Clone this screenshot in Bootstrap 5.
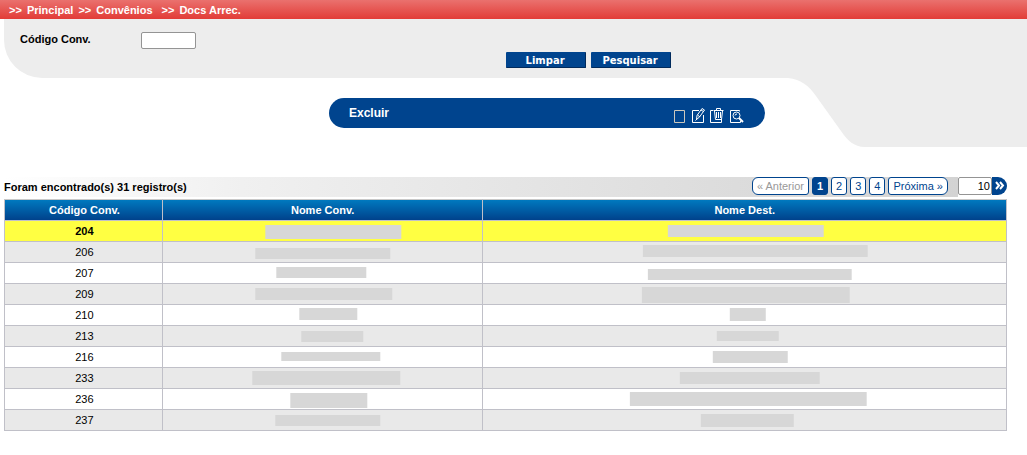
<!DOCTYPE html>
<html lang="pt-BR">
<head>
<meta charset="utf-8">
<meta name="viewport" content="width=device-width, initial-scale=1">
<title>Docs Arrec.</title>
<link href="https://cdn.jsdelivr.net/npm/bootstrap@5.3.0/dist/css/bootstrap.min.css" rel="stylesheet">
<style>
:root { --azul: #00448e; --painel: #ededed; }
body { font-family: "Liberation Sans", Arial, sans-serif; font-size: 11px; line-height: 14px; color: #000; background: #fff; }
a { color: inherit; text-decoration: none; }
.trilha { height: 19px; padding-left: 9px; color: #fff; background: linear-gradient(#ea716e, #e23c37); }
.trilha li + li { margin-left: 5px; }
.trilha a { margin-left: 2px; }
.painel { margin-left: 4px; padding: 13px 16px 10px; background: var(--painel); border-bottom-left-radius: 38px; }
.painel label { width: 121px; }
.painel .form-control { width: 55px; height: 17px; min-height: 0; padding: 0 2px; font-size: 11px; border: 1px solid #949494; border-radius: 2px; }
.acoes { margin-top: 3px; padding-left: 49%; gap: 5px; }
.acoes .btn { width: 80px; height: 16px; padding: 1px 0 0; color: #fff; background: var(--azul); border: 0 solid #002a5c; border-width: 0 1px 1px 0; border-radius: 1px; font: bold 10px/16px "DejaVu Sans", Verdana, sans-serif; }
.curva { width: 239px; height: 69px; }
.curva svg { width: 77px; height: 69px; }
.curva div { background: var(--painel); }
.barra { width: 436px; height: 30px; margin: 20px 0 0 41.75%; padding: 0 21px 0 20px; border-radius: 15px; background: var(--azul); color: #fff; font-size: 12px; }
.icones { gap: 4px; margin-top: 4px; }
.icones .btn { width: 15px; height: 18px; padding: 0; border: 0; line-height: 0; border-radius: 0; }
.lista { margin: 30px 20px 24px 4px; }
.resumo { min-height: 20px; background: linear-gradient(90deg, #fff 0%, #f0f0f0 25%, #d3d3d3 100%); padding-right: 10px; }
.resumo strong { padding-top: 3px; }
.paginas { gap: 4px; }
.paginas .page-link { height: 18px; padding: 0 4px; border: 1px solid var(--azul); border-radius: 3px; color: var(--azul); font-size: 11px; line-height: 17px; }
.paginas .active .page-link { background: var(--azul); color: #fff; font-weight: bold; }
.paginas .disabled .page-link { color: #999; background: #fff; }
.ir .form-control { width: 34px; height: 18px; min-height: 0; padding: 0 1px; text-align: right; font-size: 11px; color: #000; border: 1px solid #949494; border-radius: 2px; }
.ir .btn { width: 15px; height: 18px; padding: 0; border: 0; border-radius: 0 9px 9px 0; background: var(--azul); line-height: 0; }
.grade { margin: 2px 0 0; border-collapse: collapse; table-layout: fixed; text-align: center; color: #000; border-color: #c0c0c8; }
.grade th, .grade td { height: 21px; padding: 0; border: 1px solid #c0c0c8; line-height: 20px; vertical-align: top; }
.grade th:first-child, .grade td:first-child { padding-left: 2px; }
.grade thead th { color: #fff; border-top-color: #c8c8c8; }
.grade thead tr { background: linear-gradient(#0079bf, #003f89); }
.grade tbody tr:nth-child(even) { background: #e9e9e9; }
.grade tbody tr.atual { background: #ffff42; font-weight: bold; }
.grade svg { display: block; width: 100%; height: 20px; }
.grade rect { fill: #d7d7d7; }
.c1 { width: 15.75%; } .c2 { width: 32%; }
</style>
</head>
<body>
<nav class="trilha fw-bold" aria-label="Trilha">
  <ol class="list-unstyled d-flex align-items-center h-100 m-0">
    <li>&gt;&gt; <a href="#">Principal</a></li>
    <li>&gt;&gt; <a href="#">Convênios</a></li>
    <li class="ps-1">&gt;&gt; <a href="#">Docs Arrec.</a></li>
  </ol>
</nav>

<form class="painel">
  <div class="d-flex">
    <label for="codigo" class="fw-bold">Código Conv.</label>
    <input id="codigo" type="text" class="form-control">
  </div>
  <div class="acoes d-flex">
    <button type="reset" class="btn">Limpar</button>
    <button type="button" class="btn">Pesquisar</button>
  </div>
</form>

<div class="d-flex">
  <div class="flex-fill">
    <div class="barra d-flex justify-content-between align-items-center">
      <span class="fw-bold">Excluir</span>
      <div class="icones d-flex">
        <button class="btn" type="button" aria-label="Selecionar"><svg width="15" height="18" fill="none" stroke="#cdc8bd"><path d="M2.500 4.500h10v12h-10z"/></svg></button>
        <button class="btn" type="button" aria-label="Editar"><svg width="15" height="18" fill="none" stroke="#fff"><path d="M8 4.500H1.500v12h11V9"/><path d="M5.500 13.500l.5-4 5-7 2.500 1.500-5 7zM6.500 9l2.500 2M10 4l2.500 1.500M4.500 14.500l1.500-1.500"/></svg></button>
        <button class="btn" type="button" aria-label="Excluir"><svg width="15" height="18" fill="none" stroke="#fff"><path d="M3 4.500H.5v12h11V13"/><path d="M3.500 4.500h10M6.500 4V2.500h4V4M4.500 5l1 8.500h6l1-8.500M6.500 6v6M8.500 6v6M10.500 6v6"/></svg></button>
        <button class="btn" type="button" aria-label="Consultar"><svg width="15" height="18" fill="none" stroke="#fff"><path d="M10.500 5.500v-1h-9v12h10V15"/><circle cx="7.500" cy="9.500" r="3.500"/><path d="M10 12l4 4" stroke-width="2"/><path d="M6 9.500q0-1.500 2-1.500"/></svg></button>
      </div>
    </div>
  </div>
  <div class="curva d-flex flex-shrink-0" aria-hidden="true">
    <svg viewBox="0 0 77 69"><path d="M0 0C13 1 22 9 28 18L53 53C59 62 66 69 77 69V0Z" fill="#ededed"/></svg>
    <div class="flex-fill"></div>
  </div>
</div>

<main class="lista">
  <div class="d-flex">
    <div class="resumo flex-fill d-flex justify-content-between">
      <strong>Foram encontrado(s) 31 registro(s)</strong>
      <ul class="paginas pagination m-0">
        <li class="page-item disabled"><a class="page-link" href="#">« Anterior</a></li>
        <li class="page-item active"><a class="page-link" href="#">1</a></li>
        <li class="page-item"><a class="page-link" href="#">2</a></li>
        <li class="page-item"><a class="page-link" href="#">3</a></li>
        <li class="page-item"><a class="page-link" href="#">4</a></li>
        <li class="page-item"><a class="page-link" href="#">Próxima »</a></li>
      </ul>
    </div>
    <form class="ir d-flex">
      <input type="text" class="form-control" value="10" aria-label="Registros por página">
      <button type="button" class="btn" aria-label="Ir"><svg width="15" height="18" fill="none" stroke="#fff" stroke-width="2"><path d="M4 5l3 3.500L4 12M8 5l3 3.500L8 12"/></svg></button>
    </form>
  </div>
  <table class="grade w-100">
    <colgroup><col class="c1"><col class="c2"><col></colgroup>
    <thead><tr><th>Código Conv.</th><th>Nome Conv.</th><th>Nome Dest.</th></tr></thead>
    <tbody>
      <tr class="atual"><td>204</td><td><svg viewBox="0 0 319 20"><rect x="102" y="4" width="136" height="14"/></svg></td><td><svg viewBox="0 0 523 20"><rect x="185" y="4" width="156" height="12"/></svg></td></tr>
      <tr><td>206</td><td><svg viewBox="0 0 319 20"><rect x="92" y="6" width="135" height="11"/></svg></td><td><svg viewBox="0 0 523 20"><rect x="160" y="3" width="225" height="12"/></svg></td></tr>
      <tr><td>207</td><td><svg viewBox="0 0 319 20"><rect x="113" y="4" width="90" height="11"/></svg></td><td><svg viewBox="0 0 523 20"><rect x="165" y="6" width="204" height="11"/></svg></td></tr>
      <tr><td>209</td><td><svg viewBox="0 0 319 20"><rect x="92" y="4" width="137" height="12"/></svg></td><td><svg viewBox="0 0 523 20"><rect x="159" y="3" width="208" height="16"/></svg></td></tr>
      <tr><td>210</td><td><svg viewBox="0 0 319 20"><rect x="136" y="3" width="58" height="12"/></svg></td><td><svg viewBox="0 0 523 20"><rect x="247" y="3" width="36" height="13"/></svg></td></tr>
      <tr><td>213</td><td><svg viewBox="0 0 319 20"><rect x="138" y="5" width="62" height="11"/></svg></td><td><svg viewBox="0 0 523 20"><rect x="234" y="5" width="62" height="10"/></svg></td></tr>
      <tr><td>216</td><td><svg viewBox="0 0 319 20"><rect x="118" y="5" width="99" height="9"/></svg></td><td><svg viewBox="0 0 523 20"><rect x="230" y="4" width="75" height="12"/></svg></td></tr>
      <tr><td>233</td><td><svg viewBox="0 0 319 20"><rect x="89" y="3" width="148" height="14"/></svg></td><td><svg viewBox="0 0 523 20"><rect x="197" y="4" width="140" height="12"/></svg></td></tr>
      <tr><td>236</td><td><svg viewBox="0 0 319 20"><rect x="127" y="4" width="77" height="15"/></svg></td><td><svg viewBox="0 0 523 20"><rect x="147" y="3" width="237" height="14"/></svg></td></tr>
      <tr><td>237</td><td><svg viewBox="0 0 319 20"><rect x="112" y="5" width="105" height="11"/></svg></td><td><svg viewBox="0 0 523 20"><rect x="218" y="4" width="93" height="13"/></svg></td></tr>
    </tbody>
  </table>
</main>
<script src="https://cdn.jsdelivr.net/npm/bootstrap@5.3.0/dist/js/bootstrap.bundle.min.js"></script>
</body>
</html>
